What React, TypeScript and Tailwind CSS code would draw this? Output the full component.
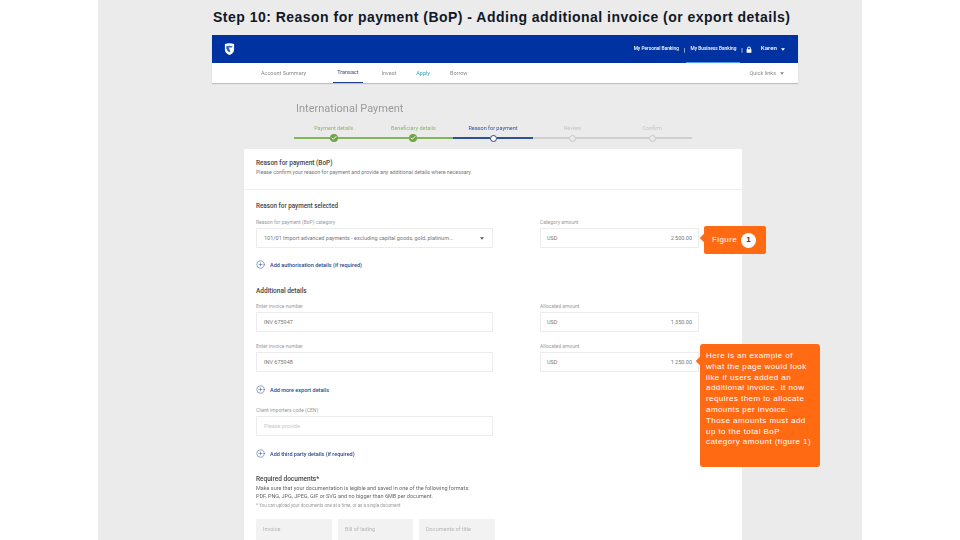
import { CirclePlus, Check } from "lucide-react";

function Caret({ className }: { className: string }) {
  return (
    <svg viewBox="0 0 8 5" className={className} fill="currentColor">
      <path d="M0 0h8L4 5z" />
    </svg>
  );
}

function Step({ label, state }: { label: string; state: "done" | "active" | "todo" }) {
  const text = state === "done" ? "text-[#8bb866]" : state === "active" ? "text-[#33549a]" : "text-[#c4c4c4]";
  const left = state === "done" ? "bg-[#85b65d]" : state === "active" ? "bg-[#2e5096]" : "bg-[#cfcfcf]";
  return (
    <div className="flex flex-col items-center">
      <div className={`text-[5.5px] leading-[8px] h-[8px] ${text}`}>{label}</div>
      <div className="flex items-center w-full h-[10px] mt-[1px]">
        <div className={`flex-1 h-[1.5px] ${left}`} />
        {state === "done" && (
          <div className="w-[8px] h-[8px] rounded-full bg-[#6fa544] flex items-center justify-center">
            <Check className="w-[6px] h-[6px] text-white" strokeWidth={4} />
          </div>
        )}
        {state === "active" && <div className="w-[7px] h-[7px] rounded-full border-[1.5px] border-[#24407f] bg-white" />}
        {state === "todo" && <div className="w-[7px] h-[7px] rounded-full border-[1.5px] border-[#c4c4c4] bg-[#ebebeb]" />}
        <div className={`flex-1 h-[1.5px] ${left}`} />
      </div>
    </div>
  );
}

function Label({ children }: { children: string }) {
  return <div className="text-[5px] leading-[6px] h-[6px] text-[#9a9a9a]">{children}</div>;
}

function AmountField({ label, value }: { label: string; value: string }) {
  return (
    <div className="w-[159px] flex flex-col">
      <Label>{label}</Label>
      <div className="mt-[3px] h-[20px] border border-[#ececec] flex items-center justify-between px-[6px] text-[5.5px] text-[#777]">
        <span>USD</span>
        <span>{value}</span>
      </div>
    </div>
  );
}

function TextField({ label, value, light }: { label: string; value: string; light?: boolean }) {
  return (
    <div className="w-[237px] flex flex-col">
      <Label>{label}</Label>
      <div className={`mt-[3px] h-[20px] border border-[#ececec] flex items-center px-[7px] text-[5.5px] ${light ? "text-[#c8c8c8]" : "text-[#777]"}`}>
        {value}
      </div>
    </div>
  );
}

function AddLink({ children }: { children: string }) {
  return (
    <div className="flex items-center gap-[5px] text-[5.5px] leading-[8px] font-medium text-[#2f4a8c]">
      <CirclePlus className="w-[9px] h-[9px] text-[#3f5f9f]" strokeWidth={1.5} />
      <span>{children}</span>
    </div>
  );
}

function Doc({ children, w }: { children: string; w: string }) {
  return <div className={`${w} h-[40px] bg-[#f2f2f2] px-[7px] pt-[6px] text-[5.5px] leading-[8px] text-[#b5b5b5]`}>{children}</div>;
}

export default function App() {
  return (
    <div className="w-[960px] h-[540px] bg-white flex justify-center overflow-hidden font-['Roboto',sans-serif]">
      <div className="relative w-[764px] h-[540px] bg-[#ebebeb] flex flex-col overflow-hidden">
        <h1 className="shrink-0 h-[35px] pl-[115px] pt-[9px] text-[14px] leading-[17px] font-bold tracking-[0.48px] whitespace-nowrap text-[#111827] font-['Liberation_Sans',sans-serif]">
          Step 10: Reason for payment (BoP) - Adding additional invoice (or export details)
        </h1>

        <div className="shrink-0 ml-[114px] w-[586px] flex flex-col shadow-[0_1px_1px_rgba(0,0,0,0.18)] blur-[0.3px]">
          <div className="h-[28px] bg-[#0033a1] flex items-center justify-between pl-[12px] pr-[13px] text-white">
            <svg viewBox="0 0 12 14" className="w-[11px] h-[14px]">
              <path d="M1 1.5 Q6 0 11 1.5 V7.5 Q11 11.5 6 13.5 Q1 11.5 1 7.5 Z" fill="#fff" />
              <path d="M2.5 4 Q6 3 9.5 4 L8.5 5.5 H5 L7 9.5 L6 10.5 Q3 9 2.5 6.5 Z" fill="#2e62b8" />
            </svg>
            <div className="flex items-center h-full text-[4.8px] font-medium">
              <span>My Personal Banking</span>
              <span className="mx-[5px] text-[6px]">|</span>
              <div className="h-full flex items-center border-b border-[#4d9de0] -mx-[4px] px-[4px]">My Business Banking</div>
              <span className="ml-[5px] mr-[2px] text-[6px]">|</span>
              <svg viewBox="0 0 10 11" className="w-[6px] h-[7px] ml-[1px]" fill="#fff">
                <path d="M2 5V3.5a3 3 0 0 1 6 0V5h1v6H1V5zm1.5 0h3V3.5a1.5 1.5 0 0 0-3 0z" />
              </svg>
              <span className="ml-[9px] text-[6.2px]">Karen</span>
              <Caret className="w-[4px] h-[3px] ml-[4px]" />
            </div>
          </div>
          <div className="h-[20px] bg-white flex items-center justify-between pl-[49px] pr-[14px] text-[5.5px] text-[#8a8a8a]">
            <div className="flex items-center h-full">
              <span>Account Summary</span>
              <span className="ml-[27px] h-full flex items-center px-[4px] -mx-[4px] border-b border-[#1f3f86] text-[#33507f]">Transact</span>
              <span className="ml-[23px]">Invest</span>
              <span className="ml-[20px] text-[#2aa6c0]">Apply</span>
              <span className="ml-[20px]">Borrow</span>
            </div>
            <div className="flex items-center gap-[4px]">
              <span>Quick links</span>
              <Caret className="w-[4px] h-[3px] text-[#8a8a8a]" />
            </div>
          </div>
        </div>

        <div className="shrink-0 ml-[198px] mt-[19px] text-[11px] leading-[14px] text-[#9a9a9a] blur-[0.3px]">International Payment</div>

        <div className="shrink-0 ml-[196px] mt-[8px] w-[398px] grid grid-cols-5 blur-[0.3px]">
          <Step label="Payment details" state="done" />
          <Step label="Beneficiary details" state="done" />
          <Step label="Reason for payment" state="active" />
          <Step label="Review" state="todo" />
          <Step label="Confirm" state="todo" />
        </div>

        <div className="ml-[146px] mt-[6px] w-[498px] flex-1 min-h-0 bg-white flex flex-col blur-[0.3px]">
          <div className="shrink-0 h-[41px] border-b border-[#eeeeee] px-[12px] pt-[10px]">
            <div className="text-[6.5px] leading-[8px] font-medium text-[#444]">Reason for payment (BoP)</div>
            <div className="text-[5.3px] leading-[8px] mt-[1px] text-[#777] whitespace-nowrap">
              Please confirm your reason for payment and provide any additional details where necessary.
            </div>
          </div>

          <div className="px-[12px] flex flex-col">
            <div className="mt-[12px] text-[6.3px] leading-[8px] font-medium text-[#444]">Reason for payment selected</div>
            <div className="mt-[9px] flex gap-[47px]">
              <div className="w-[237px] flex flex-col">
                <Label>Reason for payment (BoP) category</Label>
                <div className="mt-[3px] h-[20px] border border-[#ececec] flex items-center justify-between px-[7px] text-[5.5px] text-[#777]">
                  <span>101/01 Import advanced payments - excluding capital goods, gold, platinum...</span>
                  <Caret className="w-[4px] h-[3px] mr-[1px] text-[#555]" />
                </div>
              </div>
              <AmountField label="Category amount" value="2 500.00" />
            </div>
            <div className="mt-[12px]"><AddLink>Add authorisation details (if required)</AddLink></div>
            <div className="mt-[18px] text-[6.5px] leading-[8px] font-medium text-[#444]">Additional details</div>
            <div className="mt-[8px] flex gap-[47px]">
              <TextField label="Enter invoice number" value="INV 675947" />
              <AmountField label="Allocated amount" value="1 350.00" />
            </div>
            <div className="mt-[11px] flex gap-[47px]">
              <TextField label="Enter invoice number" value="INV 675948" />
              <AmountField label="Allocated amount" value="1 250.00" />
            </div>
            <div className="mt-[13px]"><AddLink>Add more export details</AddLink></div>
            <div className="mt-[13px]"><TextField label="Client importers code (CEN)" value="Please provide" light /></div>
            <div className="mt-[13px]"><AddLink>Add third party details (if required)</AddLink></div>
            <div className="mt-[17px] text-[6.5px] leading-[8px] font-medium text-[#444]">Required documents*</div>
            <div className="mt-[2px] text-[5.5px] leading-[7.5px] text-[#666] whitespace-nowrap">
              <div>Make sure that your documentation is legible and saved in one of the following formats:</div>
              <div>PDF, PNG, JPG, JPEG, GIF or SVG and no bigger than 6MB per document.</div>
            </div>
            <div className="mt-[2px] text-[4.5px] leading-[7px] text-[#999] whitespace-nowrap">* You can upload your documents one at a time, or as a single document</div>
            <div className="mt-[10px] flex gap-[6px]">
              <Doc w="w-[76px]">Invoice</Doc>
              <Doc w="w-[75px]">Bill of lading</Doc>
              <Doc w="w-[76px]">Documents of title</Doc>
            </div>
          </div>
        </div>

        <div className="absolute left-[606px] top-[226px] w-[62px] h-[28px] rounded-[2px] bg-[#ff6a13] flex items-center pl-[8px] text-[8px] tracking-[0.4px] text-white font-['Liberation_Sans',sans-serif]">
          <span className="absolute -left-[3px] top-[9px] w-[6px] h-[6px] rotate-45 bg-[#ff6a13]" />
          <span>Figure</span>
          <span className="ml-[4px] w-[15px] h-[15px] rounded-full bg-white flex items-center justify-center text-[8px] font-bold text-[#333]">1</span>
        </div>

        <div className="absolute left-[602px] top-[344px] w-[120px] h-[123px] rounded-[3px] bg-[#ff6a13] pl-[6px] pt-[7px] text-[8px] leading-[10.8px] tracking-[0.43px] whitespace-nowrap text-white font-['Liberation_Sans',sans-serif]">
          <span className="absolute -left-[3px] top-[14px] w-[6px] h-[6px] rotate-45 bg-[#ff6a13]" />
          <div>Here is an example of</div>
          <div>what the page would look</div>
          <div>like if users added an</div>
          <div>additional invoice. It now</div>
          <div>requires them to allocate</div>
          <div>amounts per invoice.</div>
          <div>Those amounts must add</div>
          <div>up to the total BoP</div>
          <div>category amount (figure 1)</div>
        </div>
      </div>
    </div>
  );
}
